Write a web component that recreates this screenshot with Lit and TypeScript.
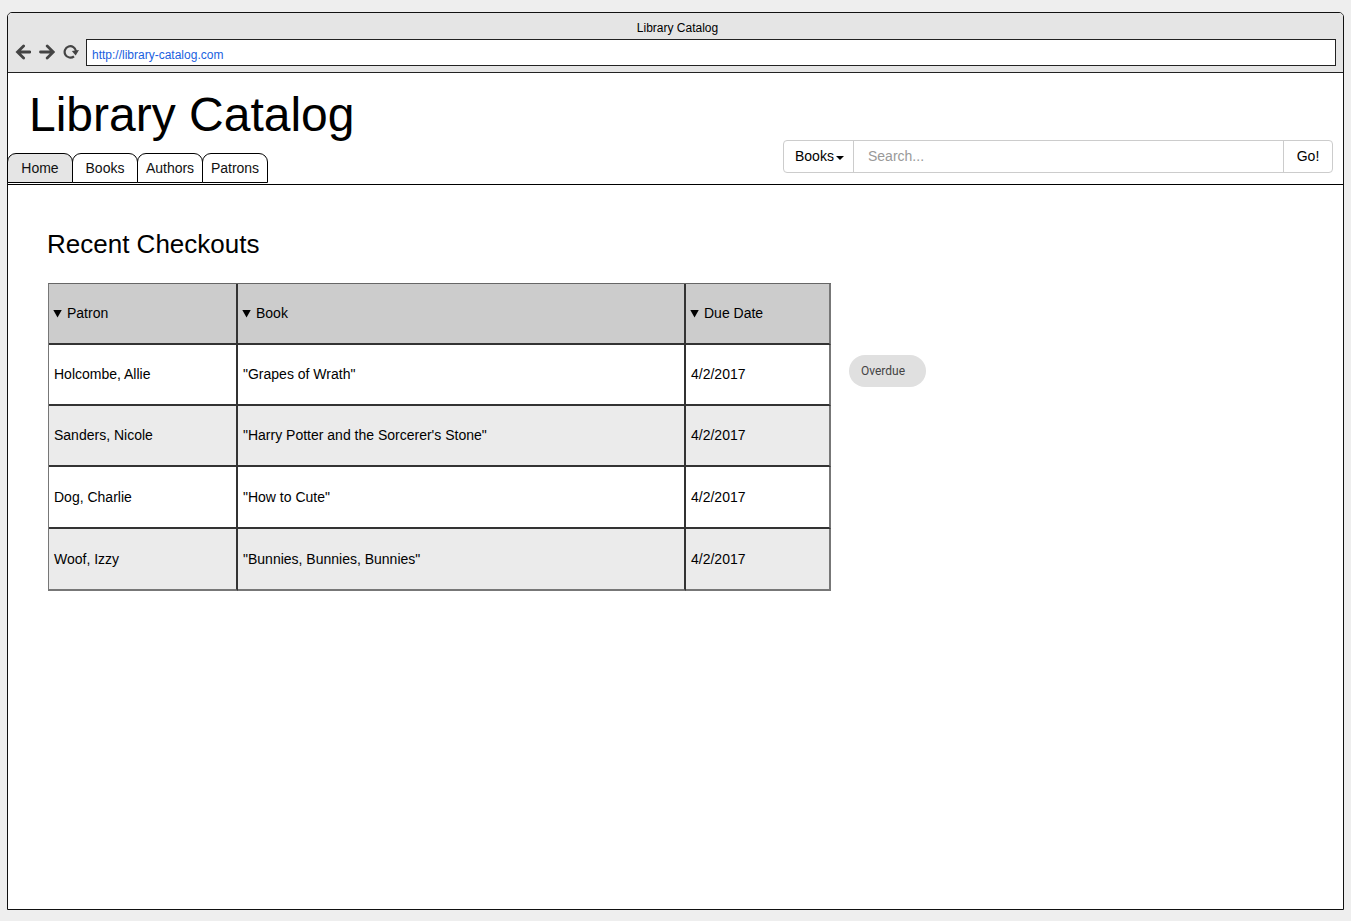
import { LitElement, html, css } from "lit";
import { customElement, state } from "lit/decorators.js";
import { classMap } from "lit/directives/class-map.js";

interface Checkout {
  patron: string;
  book: string;
  due: string;
}

const TABS = ["Home", "Books", "Authors", "Patrons"];
const COLUMNS = ["Patron", "Book", "Due Date"];
const CHECKOUTS: Checkout[] = [
  { patron: "Holcombe, Allie", book: "\"Grapes of Wrath\"", due: "4/2/2017" },
  { patron: "Sanders, Nicole", book: "\"Harry Potter and the Sorcerer's Stone\"", due: "4/2/2017" },
  { patron: "Dog, Charlie", book: "\"How to Cute\"", due: "4/2/2017" },
  { patron: "Woof, Izzy", book: "\"Bunnies, Bunnies, Bunnies\"", due: "4/2/2017" },
];

@customElement("browser-bar")
class BrowserBar extends LitElement {
  static styles = css`
    :host {
      display: block;
      background: #e5e5e5;
      border-bottom: 1px solid #222;
      border-radius: 4px 4px 0 0;
      padding: 6px 7px;
    }
    .title {
      font-size: 12px;
      line-height: 18px;
      text-align: center;
      margin-bottom: 2px;
      padding-left: 4px;
    }
    .row {
      display: flex;
      align-items: flex-start;
      gap: 7px;
    }
    .nav {
      display: flex;
      gap: 8px;
      padding-top: 5px;
    }
    .nav button {
      width: 16px;
      height: 16px;
      padding: 0;
      border: 0;
      background: none;
    }
    svg {
      display: block;
      fill: none;
      stroke: #444;
    }
    .solid {
      fill: #444;
      stroke: none;
    }
    .address {
      flex: 1;
      min-width: 0;
      height: 27px;
      box-sizing: border-box;
      border: 1px solid #222;
      border-radius: 0;
      background: #fff;
      padding: 4px 5px 0;
      margin: 0;
      font: 12px "Liberation Sans", Arial, sans-serif;
      color: #1a5fe0;
      outline: 0;
    }
  `;

  render() {
    return html`
      <div class="title">Library Catalog</div>
      <div class="row">
        <div class="nav">
          <button aria-label="Back">
            <svg width="16" height="16" viewBox="0 0 16 16" stroke-width="2.8" stroke-linecap="round">
              <path d="M14.9 8H3.5M8.6 2L2.5 8l6.1 6" />
            </svg>
          </button>
          <button aria-label="Forward">
            <svg width="16" height="16" viewBox="0 0 16 16" stroke-width="2.8" stroke-linecap="round">
              <path d="M1.5 8H13M8.2 2l6.1 6-6.1 6" />
            </svg>
          </button>
          <button aria-label="Reload">
            <svg width="16" height="16" viewBox="0 0 16 16" stroke-width="2.2">
              <path d="M11 12.3A5.7 5.7 0 1 1 13 7.2" />
              <path class="solid" d="M8.8 6.9L16 5.9l-3.3 5.6z" />
            </svg>
          </button>
        </div>
        <input class="address" type="text" aria-label="Address" value="http://library-catalog.com" />
      </div>
    `;
  }
}

@customElement("search-bar")
class SearchBar extends LitElement {
  static styles = css`
    :host {
      display: block;
    }
    form {
      display: flex;
      height: 33px;
      box-sizing: border-box;
      margin: 0;
      border: 1px solid #ccc;
      border-radius: 4px;
      background: #fff;
      overflow: hidden;
    }
    select,
    input,
    button {
      font: 14px "Liberation Sans", Arial, sans-serif;
      color: #000;
      background: none;
      border: 0;
      border-radius: 0;
      margin: 0;
      outline: 0;
    }
    .scope {
      position: relative;
      display: flex;
      width: 69px;
      border-right: 1px solid #ccc;
    }
    select {
      appearance: none;
      width: 100%;
      padding: 0 0 2px 11px;
    }
    .caret {
      position: absolute;
      right: 9px;
      top: 15px;
      border: 4px solid transparent;
      border-top-color: #000;
      border-bottom: 0;
      pointer-events: none;
    }
    input {
      flex: 1;
      min-width: 0;
      padding: 0 14px 2px;
    }
    input::placeholder {
      color: #999;
      opacity: 1;
    }
    button {
      width: 49px;
      padding: 0 0 2px;
      text-align: center;
      border-left: 1px solid #ccc;
    }
  `;

  render() {
    return html`
      <form @submit=${(e: Event) => e.preventDefault()}>
        <span class="scope">
          <select aria-label="Search in">
            <option>Books</option>
            <option>Authors</option>
            <option>Patrons</option>
          </select>
          <span class="caret"></span>
        </span>
        <input type="search" aria-label="Search" placeholder="Search..." />
        <button type="submit">Go!</button>
      </form>
    `;
  }
}

@customElement("checkout-table")
class CheckoutTable extends LitElement {
  static styles = css`
    :host {
      display: block;
    }
    table {
      width: 100%;
      table-layout: fixed;
      border-collapse: separate;
      border-spacing: 0;
      border-top: 1px solid #666;
      border-left: 1px solid #777;
      font-size: 14px;
      line-height: 16px;
    }
    .patron {
      width: 189px;
    }
    .due {
      width: 145px;
    }
    th,
    td {
      box-sizing: border-box;
      height: 61px;
      padding: 0 5px 2px;
      text-align: left;
      font-weight: normal;
      border-right: 2px solid #333;
      border-bottom: 2px solid #333;
    }
    th {
      background: #ccc;
      padding-left: 4px;
    }
    th:last-child,
    td:last-child {
      border-right-color: #777;
    }
    tbody tr:nth-child(even) {
      background: #ebebeb;
    }
    tbody tr:nth-child(n + 3) td {
      height: 62px;
      padding-bottom: 0;
    }
    tbody tr:last-child td {
      border-bottom-color: #777;
    }
    .sort {
      display: flex;
      align-items: center;
      gap: 5px;
      padding: 0;
      border: 0;
      background: none;
      font: inherit;
      color: inherit;
    }
    .arrow {
      width: 9px;
      height: 8px;
      margin-top: 2px;
      background: #000;
      clip-path: polygon(0 0, 100% 0, 50% 100%);
    }
  `;

  render() {
    return html`
      <table>
        <colgroup>
          <col class="patron" />
          <col />
          <col class="due" />
        </colgroup>
        <thead>
          <tr>
            ${COLUMNS.map(
              (name) => html`<th scope="col">
                <button class="sort"><span class="arrow"></span>${name}</button>
              </th>`
            )}
          </tr>
        </thead>
        <tbody>
          ${CHECKOUTS.map(
            (c) => html`<tr>
              <td>${c.patron}</td>
              <td>${c.book}</td>
              <td>${c.due}</td>
            </tr>`
          )}
        </tbody>
      </table>
    `;
  }
}

@customElement("app-root")
class AppRoot extends LitElement {
  static styles = css`
    :host {
      display: flex;
      box-sizing: border-box;
      min-height: 100vh;
      padding: 12px 7px 11px;
      background: #eee;
      color: #000;
      font-family: "Liberation Sans", Arial, sans-serif;
    }
    .window {
      flex: 1;
      min-width: 0;
      border: 1px solid #111;
      border-radius: 5px 5px 0 0;
      background: #fff;
    }
    header {
      display: flex;
      justify-content: space-between;
      align-items: flex-end;
      border-bottom: 1px solid #000;
    }
    h1 {
      margin: 14px 0 10px 21px;
      font-size: 48px;
      line-height: 56px;
      font-weight: normal;
    }
    .tabs {
      display: flex;
      margin: 0 0 1px -1px;
    }
    .tab {
      box-sizing: border-box;
      width: 66px;
      height: 30px;
      margin-right: -1px;
      border: 1px solid #000;
      border-radius: 9px 9px 0 0;
      background: #fff;
      color: #111;
      font-size: 14px;
      line-height: 29px;
      text-align: center;
      text-decoration: none;
    }
    .active {
      background: #e5e5e5;
    }
    search-bar {
      flex: 0 1 550px;
      margin: 0 10px 11px 24px;
    }
    main {
      padding: 43px 39px;
    }
    h2 {
      margin: 0 0 23px;
      font-size: 26px;
      line-height: 32px;
      font-weight: normal;
    }
    .recent {
      display: flex;
      align-items: flex-start;
      gap: 18px;
      padding-left: 1px;
    }
    checkout-table {
      flex: 0 1 783px;
    }
    .chip {
      margin-top: 72px;
      padding: 0 21px 0 12px;
      border-radius: 16px;
      background: #e0e0e0;
      color: #444;
      font-family: Roboto, sans-serif;
      font-size: 12px;
      line-height: 32px;
    }
  `;

  @state() private current = "Home";

  render() {
    return html`
      <div class="window">
        <browser-bar></browser-bar>
        <header>
          <div>
            <h1>Library Catalog</h1>
            <nav class="tabs">
              ${TABS.map(
                (name) => html`<a
                  href="#"
                  class=${classMap({ tab: true, active: name === this.current })}
                  @click=${(e: Event) => {
                    e.preventDefault();
                    this.current = name;
                  }}
                  >${name}</a
                >`
              )}
            </nav>
          </div>
          <search-bar></search-bar>
        </header>
        <main>
          <h2>Recent Checkouts</h2>
          <div class="recent">
            <checkout-table></checkout-table>
            <span class="chip">Overdue</span>
          </div>
        </main>
      </div>
    `;
  }
}
